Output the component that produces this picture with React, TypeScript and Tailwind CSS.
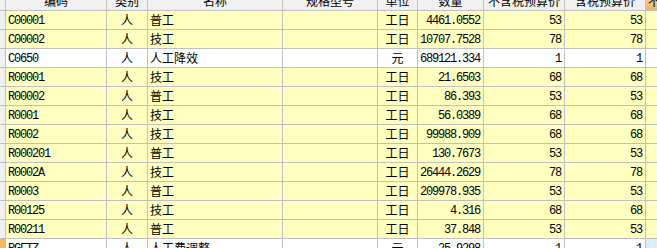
import React from 'react';

type Row = {
  code: string;
  kind: string;
  name: string;
  spec: string;
  unit: string;
  qty: string;
  price: string;
  taxPrice: string;
};

const rows: Row[] = [
  { code: 'C00001', kind: '人', name: '普工', spec: '', unit: '工日', qty: '4461.0552', price: '53', taxPrice: '53' },
  { code: 'C00002', kind: '人', name: '技工', spec: '', unit: '工日', qty: '10707.7528', price: '78', taxPrice: '78' },
  { code: 'C0650', kind: '人', name: '人工降效', spec: '', unit: '元', qty: '689121.334', price: '1', taxPrice: '1' },
  { code: 'R00001', kind: '人', name: '技工', spec: '', unit: '工日', qty: '21.6503', price: '68', taxPrice: '68' },
  { code: 'R00002', kind: '人', name: '普工', spec: '', unit: '工日', qty: '86.393', price: '53', taxPrice: '53' },
  { code: 'R0001', kind: '人', name: '技工', spec: '', unit: '工日', qty: '56.0389', price: '68', taxPrice: '68' },
  { code: 'R0002', kind: '人', name: '技工', spec: '', unit: '工日', qty: '99988.909', price: '68', taxPrice: '68' },
  { code: 'R000201', kind: '人', name: '普工', spec: '', unit: '工日', qty: '130.7673', price: '53', taxPrice: '53' },
  { code: 'R0002A', kind: '人', name: '技工', spec: '', unit: '工日', qty: '26444.2629', price: '78', taxPrice: '78' },
  { code: 'R0003', kind: '人', name: '普工', spec: '', unit: '工日', qty: '209978.935', price: '53', taxPrice: '53' },
  { code: 'R00125', kind: '人', name: '技工', spec: '', unit: '工日', qty: '4.316', price: '68', taxPrice: '68' },
  { code: 'R00211', kind: '人', name: '普工', spec: '', unit: '工日', qty: '37.848', price: '53', taxPrice: '53' },
  { code: 'RGFTZ', kind: '人', name: '人工费调整', spec: '', unit: '元', qty: '25.9298', price: '1', taxPrice: '1' },
];

// column widths include the 1px right border
const cols = ['w-[6px]', 'w-[101px]', 'w-[41px]', 'w-[135px]', 'w-[95px]', 'w-[40px]', 'w-[66px]', 'w-[81px]', 'w-[81px]'];

const cjk = "font-['Noto_Sans_CJK_SC',sans-serif]";
const mono = "font-['Liberation_Mono','Noto_Sans_CJK_SC',monospace] tracking-[-1.2px]";

const App = () => {
  return (
    <div className="w-[657px] h-[248px] overflow-hidden bg-white text-black text-[12px] leading-none">
      {/* Header (partly scrolled out of view) */}
      <div className={`flex h-[19px] -mt-[8px] border-b border-[#c0c0c0] bg-[#f0f0f0] ${cjk}`}>
        <div className={`${cols[0]} shrink-0 border-r border-[#c0c0c0]`} />
        {['编码', '类别', '名称', '规格型号', '单位', '数量', '不含税预算价', '含税预算价'].map((h, i) => (
          <div key={h} className={`${cols[i + 1]} shrink-0 border-r border-[#c0c0c0] flex items-center justify-center whitespace-nowrap overflow-hidden`}>
            {h}
          </div>
        ))}
        <div className="flex-1 bg-gradient-to-b from-[#fbd9a6] to-[#f1b667] flex items-center pl-[2px] overflow-hidden whitespace-nowrap">
          不含
        </div>
      </div>

      {/* Rows */}
      {rows.map((r, idx) => {
        const white = r.unit === '元';
        const last = idx === rows.length - 1;
        const bg = white ? 'bg-white' : 'bg-[#ffffc0]';
        return (
          <div key={r.code} className={`flex h-[19px] border-b border-[#c0c0c0] ${bg}`}>
            <div className={`${cols[0]} shrink-0 border-r border-[#c0c0c0] ${last ? 'bg-[#f4b862]' : 'bg-[#f0f0f0]'}`} />
            <div className={`${cols[1]} shrink-0 border-r border-[#c0c0c0] flex items-center pl-[2px] pt-[1px] ${mono}`}>{r.code}</div>
            <div className={`${cols[2]} shrink-0 border-r border-[#c0c0c0] flex items-center justify-center ${cjk}`}>{r.kind}</div>
            <div className={`${cols[3]} shrink-0 border-r border-[#c0c0c0] flex items-center pl-[2px] ${cjk}`}>{r.name}</div>
            <div className={`${cols[4]} shrink-0 border-r border-[#c0c0c0]`}>{r.spec}</div>
            <div className={`${cols[5]} shrink-0 border-r border-[#c0c0c0] flex items-center justify-center ${cjk}`}>{r.unit}</div>
            <div className={`${cols[6]} shrink-0 border-r border-[#c0c0c0] flex items-center justify-end pr-[3px] pt-[1px] overflow-hidden whitespace-nowrap ${mono}`}>{r.qty}</div>
            <div className={`${cols[7]} shrink-0 border-r border-[#c0c0c0] flex items-center justify-end pr-[3px] pt-[1px] ${mono}`}>{r.price}</div>
            <div className={`${cols[8]} shrink-0 border-r border-[#c0c0c0] flex items-center justify-end pr-[3px] pt-[1px] ${mono}`}>{r.taxPrice}</div>
            <div className={`flex-1 ${last ? 'bg-[#ddeeff]' : ''}`} />
          </div>
        );
      })}
    </div>
  );
};

export default App;
